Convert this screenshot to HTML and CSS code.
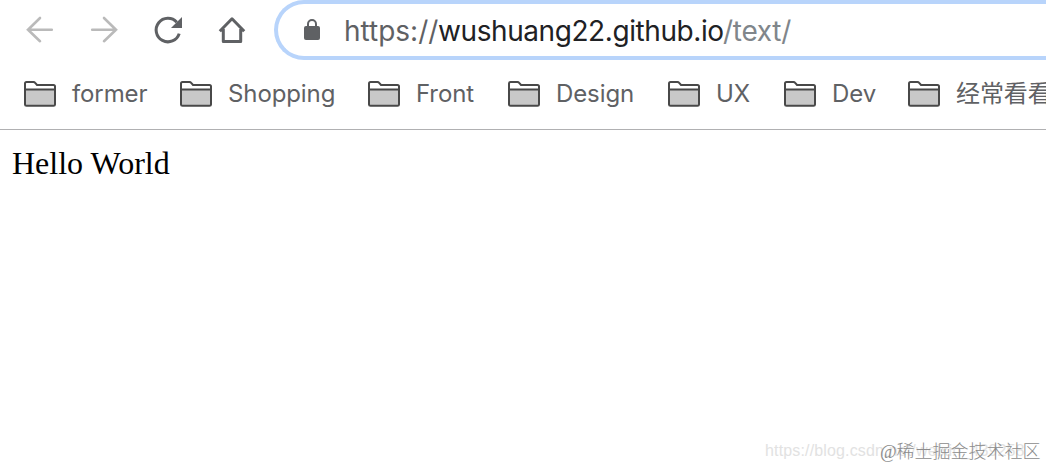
FILE: index.html
```html
<!DOCTYPE html>
<html lang="en">
<head>
    <meta charset="UTF-8">
    <meta name="viewport" content="width=device-width, initial-scale=1.0">
    <title>Hello World</title>
    <link rel="stylesheet" href="styles.css">
</head>
<body>
    <svg class="defs" width="0" height="0">
        <symbol id="folder" viewBox="0 0 32 26">
            <path d="M1 8.5h30v14.5a2 2 0 0 1-2 2h-26a2 2 0 0 1-2-2z" fill="#c8c8c8"/>
            <path d="M1 23.500V2.500Q1 1 2.500 1H9.500Q10.500 1 11.200 1.900L13 4H29.500Q31 4 31 5.500V23.500Q31 24.800 29.500 24.800H2.500Q1 24.800 1 23.500ZM1 8.500H31" fill="none" stroke="#484848" stroke-width="2"/>
        </symbol>
    </svg>

    <header class="browser">
        <div class="toolbar">
            <svg class="nav-icon disabled" viewBox="0 0 32 32"><path d="M27.800 15.700H4M16 4L4 15.700L16 27.200"/></svg>
            <svg class="nav-icon disabled" viewBox="0 0 32 32"><path d="M4.200 15.700H28M16 4L28 15.700L16 27.200"/></svg>
            <svg class="nav-icon" viewBox="0 0 32 32">
                <path d="M27.200 19.600A11.800 11.800 0 1 1 24.800 8.200"/>
                <path class="solid" d="M30 3V14H19Z"/>
            </svg>
            <svg class="nav-icon" viewBox="0 0 32 32"><path class="home" d="M3.800 17.300L16 4.800L28.200 17.300M7.300 15V27.600H24.700V15"/></svg>
            <div class="address">
                <svg class="lock" viewBox="0 0 16 22">
                    <rect x="0" y="7" width="16" height="14" rx="2" fill="#5f6164"/>
                    <path d="M4 8V5a4 4 0 0 1 8 0V8" fill="none" stroke="#5f6164" stroke-width="2"/>
                </svg>
                <div class="url"><span class="scheme">https://</span><span class="host">wushuang22.github.io</span><span class="path">/text/</span></div>
            </div>
        </div>
        <nav class="bookmarks">
            <div class="bookmark"><svg class="folder"><use href="#folder"/></svg><span>former</span></div>
            <div class="bookmark"><svg class="folder"><use href="#folder"/></svg><span>Shopping</span></div>
            <div class="bookmark"><svg class="folder"><use href="#folder"/></svg><span>Front</span></div>
            <div class="bookmark"><svg class="folder"><use href="#folder"/></svg><span>Design</span></div>
            <div class="bookmark"><svg class="folder"><use href="#folder"/></svg><span>UX</span></div>
            <div class="bookmark"><svg class="folder"><use href="#folder"/></svg><span>Dev</span></div>
            <div class="bookmark"><svg class="folder"><use href="#folder"/></svg><span>经常看看</span></div>
        </nav>
    </header>

    <main class="page">Hello World</main>

    <div class="watermark blog">https://blog.csdn.net/weixin_439258</div>
    <div class="watermark community">@稀土掘金技术社区</div>
</body>
</html>
```
FILE: styles.css
```css
* {
    box-sizing: border-box;
}
body {
    position: relative;
    margin: 0;
    height: 468px;
    overflow: hidden;
    background: #fff;
}
.defs {
    position: absolute;
}
.browser {
    height: 130px;
    border-bottom: 1px solid #b0b0b2;
    font-family: Inter, "Noto Sans CJK SC", sans-serif;
    color: #5f6164;
}
.toolbar {
    display: flex;
    align-items: center;
    gap: 32px;
    height: 60px;
    padding-left: 24px;
}
.nav-icon {
    flex: none;
    width: 32px;
    height: 32px;
    fill: none;
    stroke: #5f6164;
    stroke-width: 3;
}
.disabled {
    stroke: #bababa;
    stroke-width: 2.6;
    stroke-linecap: round;
}
.solid {
    fill: #5f6164;
    stroke: none;
}
.home {
    stroke-linejoin: round;
}
.address {
    flex: 1;
    display: flex;
    align-items: center;
    height: 60px;
    margin-left: -6px;
    padding-left: 26px;
    border: 4px solid #b8d4fb;
    border-right: none;
    border-radius: 30px 0 0 30px;
}
.lock {
    flex: none;
    width: 16px;
    height: 22px;
}
.url {
    display: flex;
    margin-left: 24px;
    padding-top: 1px;
    font-size: 28px;
    line-height: 34px;
    white-space: nowrap;
}
.scheme {
    width: 94px;
}
.host {
    width: 285px;
    color: #202124;
    letter-spacing: -0.42px;
}
.path {
    color: #80868b;
    letter-spacing: -0.3px;
}
.bookmarks {
    display: grid;
    grid-template-columns: 156px 188px 140px 160px 116px 124px 156px;
    align-items: center;
    height: 68px;
    padding-left: 24px;
}
.bookmark {
    display: flex;
    align-items: center;
    gap: 16px;
    font-size: 24px;
    line-height: 30px;
    letter-spacing: -0.1px;
    white-space: nowrap;
}
.folder {
    flex: none;
    width: 32px;
    height: 26px;
}
.page {
    padding: 15px 12px;
    font-family: "Liberation Serif", serif;
    font-size: 32px;
    line-height: 37px;
    color: #000;
}
.watermark {
    position: absolute;
    white-space: nowrap;
}
.blog {
    left: 765px;
    top: 441px;
    font-family: "Liberation Sans", sans-serif;
    font-size: 16px;
    line-height: 20px;
    letter-spacing: 0.15px;
    color: #e2e2e2;
}
.community {
    left: 880px;
    top: 438px;
    font-family: "Liberation Serif", "Noto Sans CJK SC", serif;
    font-size: 18px;
    font-weight: 300;
    line-height: 28px;
    color: #8c8c8c;
}
```
